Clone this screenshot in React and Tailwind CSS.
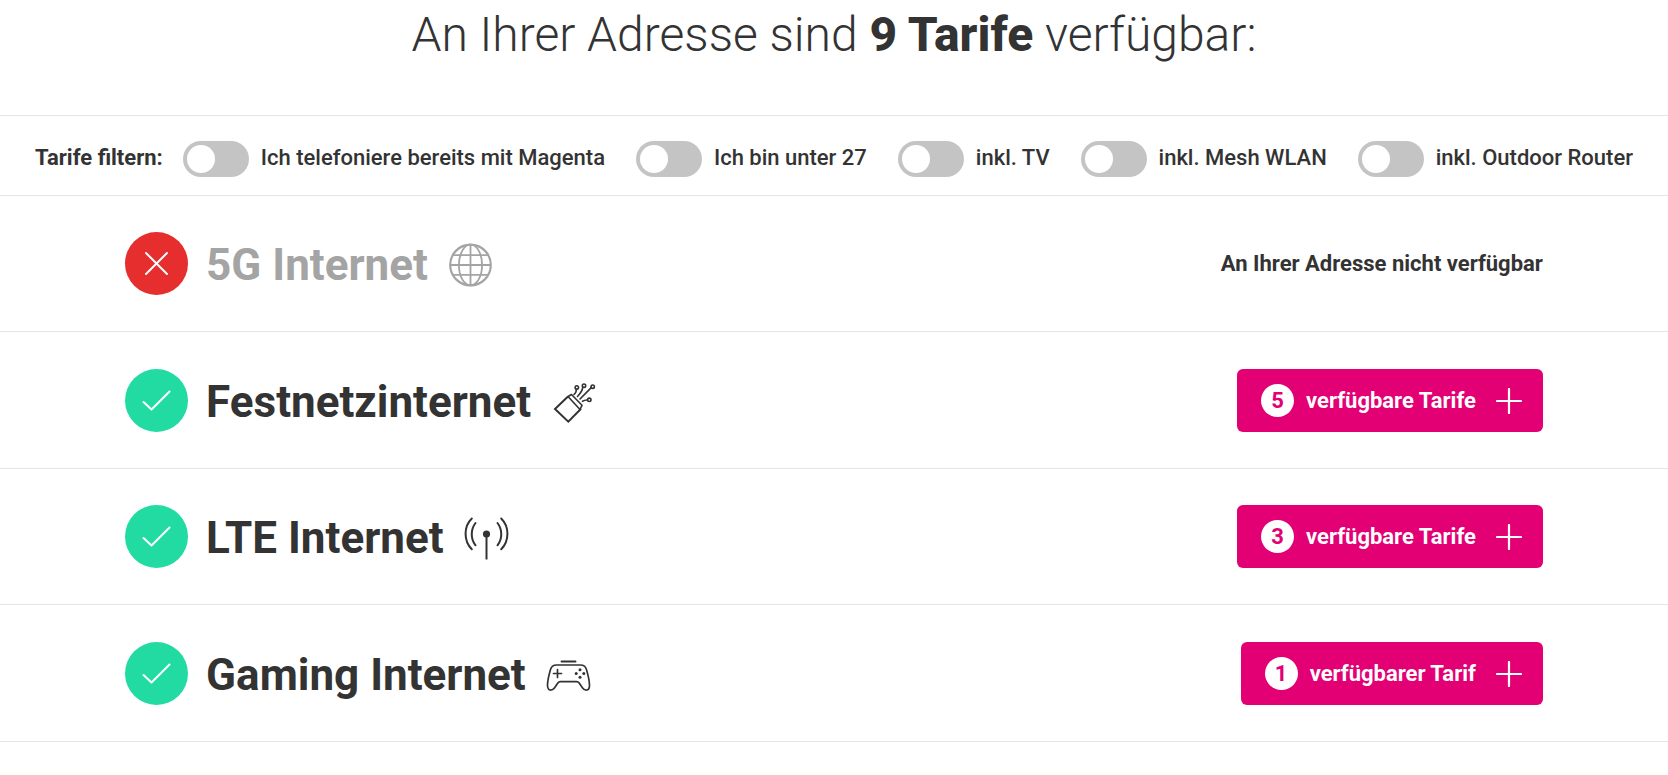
import React, { useState } from "react";

const filters = [
  { id: "magenta", label: "Ich telefoniere bereits mit Magenta" },
  { id: "u27", label: "Ich bin unter 27" },
  { id: "tv", label: "inkl. TV" },
  { id: "mesh", label: "inkl. Mesh WLAN" },
  { id: "outdoor", label: "inkl. Outdoor Router" },
];

function GlobeIcon() {
  return (
    <svg className="size-[45px] shrink-0" viewBox="0 0 45 45" fill="none" stroke="currentColor" strokeWidth="1.8" aria-hidden="true">
      <circle cx="22.500" cy="22" r="20.300" strokeWidth="2.200" />
      <ellipse cx="22.500" cy="22" rx="11.600" ry="20.300" />
      <path d="M22.500 1.500v41M2.200 22h40.600M5 12.200h35M5 31.800h35" />
    </svg>
  );
}

function FiberIcon() {
  return (
    <svg className="size-[45px] shrink-0" viewBox="0 0 45 45" fill="none" stroke="currentColor" strokeWidth="1.600" strokeLinecap="round" strokeLinejoin="round" aria-hidden="true">
      <g transform="translate(2 1)">
        <path d="M15 15.500 2 28l13.300 12.700L28 27.800" strokeWidth="2" strokeLinecap="butt" strokeLinejoin="miter" />
        <path d="M15 15.500 18.500 13.500 29 24.300 27 28.500Z" />
        <path d="M21 13.500c1.800-1.500 2.500-3.200 2.300-5.300M24.500 15.500c2.800-3 4.900-5.500 5.300-9.400M27 18l11.500-11.600M29.500 20.300c1.600-.9 2.900-1.200 4.400-1.300" />
        <circle cx="23.800" cy="6.400" r="1.700" />
        <circle cx="31" cy="4.700" r="1.700" />
        <circle cx="39.700" cy="5.700" r="1.700" />
        <circle cx="36.300" cy="18.800" r="1.700" />
      </g>
    </svg>
  );
}

function AntennaIcon() {
  return (
    <svg className="size-[45px] shrink-0" viewBox="0 0 45 45" fill="none" stroke="currentColor" strokeWidth="2" strokeLinecap="round" aria-hidden="true">
      <circle cx="22.500" cy="18" r="3.600" fill="currentColor" stroke="none" />
      <path d="M22.500 19v24.500" strokeLinecap="butt" />
      <path d="M7.800 2.500c-8.300 8-8.300 22.500 0 30.800M11.500 7c-5 6.500-5 15.800 0 22.300M37.200 2.500c8.300 8 8.300 22.500 0 30.800M33.500 7c5 6.500 5 15.800 0 22.300" />
    </svg>
  );
}

function GamepadIcon() {
  return (
    <svg className="size-[45px] shrink-0" viewBox="0 0 45 45" fill="none" stroke="currentColor" strokeWidth="1.700" strokeLinecap="round" strokeLinejoin="round" aria-hidden="true">
      <path d="M15.500 8.500h14" strokeWidth="1.900" />
      <path d="M10.500 12h24c3.200 0 5.200 1.600 6 4.600 1.500 5.200 3 10.500 3 15.700 0 2.700-1.200 4.800-3.200 4.800-1.700 0-2.900-.8-3.900-2.300L33.200 30c-.7-1-1.200-1.400-2.500-1.400H14.300c-1.300 0-1.800.4-2.500 1.400l-3.200 4.800c-1 1.500-2.200 2.300-3.900 2.300-2 0-3.200-2.100-3.200-4.800 0-5.200 1.500-10.500 3-15.700.8-3 2.800-4.600 6-4.600Z" />
      <path d="M11.500 16.500v8M7.500 20.500h8" />
      <g fill="currentColor" stroke="none">
        <circle cx="34" cy="16.700" r="1.500" />
        <circle cx="34" cy="24.300" r="1.500" />
        <circle cx="30.200" cy="20.500" r="1.500" />
        <circle cx="37.800" cy="20.500" r="1.500" />
      </g>
    </svg>
  );
}

const categories = [
  { name: "5G Internet", Icon: GlobeIcon, count: 0 },
  { name: "Festnetzinternet", Icon: FiberIcon, count: 5 },
  { name: "LTE Internet", Icon: AntennaIcon, count: 3 },
  { name: "Gaming Internet", Icon: GamepadIcon, count: 1 },
];

function StatusBadge({ available }) {
  return (
    <span className={available ? "size-[63px] shrink-0 rounded-full bg-[#22dba3]" : "size-[63px] shrink-0 rounded-full bg-[#e62e2e]"}>
      <svg viewBox="0 0 63 63" fill="none" stroke="#fff" strokeWidth="2" strokeLinecap="round" strokeLinejoin="round" aria-hidden="true">
        {available ? <path d="M18.500 33 26.500 40.500 44.500 22.500" /> : <path d="M21 21 42 42M42 21 21 42" />}
      </svg>
    </span>
  );
}

function Toggle({ id, label }) {
  const [on, setOn] = useState(false);
  return (
    <div className="flex items-center gap-3">
      <input
        id={id}
        type="checkbox"
        role="switch"
        checked={on}
        onChange={() => setOn(!on)}
        className="mt-[3px] h-9 w-[66px] shrink-0 cursor-pointer appearance-none rounded-full bg-[#c4c4c4] p-1 before:block before:size-7 before:rounded-full before:bg-white checked:bg-[#e20074] checked:before:translate-x-[30px]"
      />
      <label htmlFor={id} className="cursor-pointer font-medium whitespace-nowrap">
        {label}
      </label>
    </div>
  );
}

function CategoryRow({ name, Icon, count }) {
  const available = count > 0;
  return (
    <li className="flex items-center justify-between border-b border-[#e5e5e5] px-[7.5%] pt-9 pb-9 even:pt-[37px]">
      <div className={available ? "flex items-center gap-[18px]" : "flex items-center gap-[18px] text-[#a4a4a4]"}>
        <StatusBadge available={available} />
        <div className="flex items-center gap-5 pt-[3px]">
          <h2 className="text-[44px] leading-[50px] font-bold">{name}</h2>
          <Icon />
        </div>
      </div>
      {available ? (
        <button type="button" className="flex h-[63px] cursor-pointer items-center rounded-md bg-[#e20074] pr-[21px] pl-6 text-[22px] font-bold text-white">
          <span className="flex size-[33px] items-center justify-center rounded-full bg-white text-[#e20074]">{count}</span>
          <span className="ml-3">{count === 1 ? "verfügbarer Tarif" : "verfügbare Tarife"}</span>
          <svg className="ml-5 size-[26px]" viewBox="0 0 26 26" stroke="currentColor" strokeWidth="2.200" strokeLinecap="round" aria-hidden="true">
            <path d="M13 1v24M1 13h24" />
          </svg>
        </button>
      ) : (
        <p className="text-[22px] font-bold">An Ihrer Adresse nicht verfügbar</p>
      )}
    </li>
  );
}

export default function App() {
  return (
    <main className="bg-white font-['Roboto',sans-serif] text-[#333333]">
      <h1 className="pt-[5px] pb-[50px] text-center text-[48px] leading-[60px] font-light">
        An Ihrer Adresse sind <strong className="font-extrabold">9 Tarife</strong> verfügbar:
      </h1>
      <div className="flex h-[81px] items-center gap-5 border-y border-[#e5e5e5] px-[35px] pt-1 text-[22px]">
        <span className="font-bold whitespace-nowrap">Tarife filtern:</span>
        <div className="flex grow items-center justify-between">
          {filters.map((f) => (
            <Toggle key={f.id} {...f} />
          ))}
        </div>
      </div>
      <ul>
        {categories.map((c) => (
          <CategoryRow key={c.name} {...c} />
        ))}
      </ul>
    </main>
  );
}
